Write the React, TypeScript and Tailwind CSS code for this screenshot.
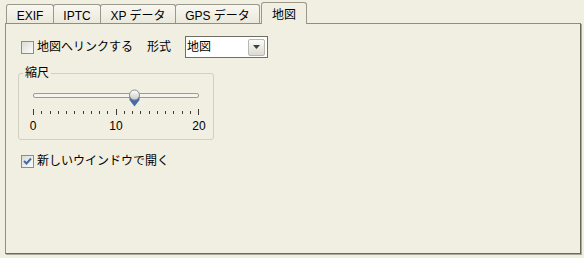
import React from "react";

const font = { fontFamily: '"Liberation Sans", "Noto Sans CJK JP", sans-serif' };

const tabs = [
  { label: "EXIF", w: "w-[48px]" },
  { label: "IPTC", w: "w-[48px]" },
  { label: "XP データ", w: "w-[76px]" },
  { label: "GPS データ", w: "w-[85px]" },
];

function CheckBox({ checked }: { checked?: boolean }) {
  return (
    <div className="w-[13px] h-[13px] border border-[#8d8c86] bg-gradient-to-br from-[#dcdcd6] to-[#fbfbf9] flex items-center justify-center">
      {checked && (
        <svg width="9" height="9" viewBox="0 0 9 9">
          <path d="M1 4 L3.5 6.5 L8 1.5" fill="none" stroke="#4a6aa5" strokeWidth="2" />
        </svg>
      )}
    </div>
  );
}

function Thumb() {
  return (
    <svg width="11" height="18" viewBox="0 0 11 18" className="absolute left-[95px] top-[-5px]">
      <defs>
        <linearGradient id="tg" x1="0" y1="0" x2="0" y2="1">
          <stop offset="0" stopColor="#ffffff" />
          <stop offset="1" stopColor="#c9c9c2" />
        </linearGradient>
      </defs>
      <path d="M0.5 7 L10.5 7 L10.5 11 L5.5 17.5 L0.5 11 Z" fill="#456ca8" />
      <circle cx="5.5" cy="6" r="5" fill="url(#tg)" stroke="#8e8e86" />
    </svg>
  );
}

export default function App() {
  const ticks = Array.from({ length: 21 }, (_, i) => i);
  return (
    <div className="w-[584px] h-[258px] bg-[#f1efe2] text-[12px] text-black overflow-hidden" style={font}>
      {/* Tab strip */}
      <div className="flex items-end h-[23px] pl-[6px]">
        {tabs.map((t, i) => (
          <div
            key={t.label}
            className={`${t.w} h-[19px] ${i > 0 ? "-ml-px" : ""} border border-b-0 border-[#9a9888] rounded-t-[3px] bg-gradient-to-b from-[#f8f7f1] to-[#ebe9dc] flex justify-center pt-[4px] leading-[15px]`}
          >
            {t.label}
          </div>
        ))}
        <div className="relative z-10 ml-px w-[46px] h-[22px] -mb-px border border-b-0 border-[#9a9888] rounded-t-[3px] bg-[#f1efe2] flex justify-center pt-[5px] leading-[15px]">
          地図
        </div>
      </div>

      {/* Panel */}
      <div className="ml-[5px] w-[576px] h-[231px] border border-[#8f8e80] border-r-[#6b6a5c] border-b-[#6b6a5c] shadow-[1px_1px_0_#a9a898]">
        <div className="flex items-center h-[22px] mt-[12px] pl-[15px]">
          <CheckBox />
          <span className="ml-[3px]">地図へリンクする</span>
          <span className="ml-[14px]">形式</span>
          <div className="ml-[14px] w-[83px] h-[22px] border border-[#6f6e63] bg-white flex items-center justify-between pl-[1px] pr-[2px]">
            <span>地図</span>
            <div className="w-[17px] h-[17px] border border-[#b9b8ad] rounded-[2px] bg-gradient-to-b from-[#fbfbf8] to-[#dcdbd2] flex items-center justify-center">
              <svg width="7" height="4" viewBox="0 0 7 4">
                <path d="M0 0 H7 L3.5 4 Z" fill="#3f3f3f" />
              </svg>
            </div>
          </div>
        </div>

        <fieldset className="ml-[12px] mt-[8px] w-[196px] h-[74px] border border-[#d0d0bf] rounded-[3px]">
          <legend className="ml-[4px] px-[2px] leading-[14px]">縮尺</legend>
          <div className="relative ml-[14px] mt-[13px] w-[166px] h-[5px] border border-[#9d9c93] rounded-[2px] bg-[#f4f3ee]">
            <Thumb />
          </div>
          <div className="ml-[14px] mt-[11px] w-[166px] h-[6px] flex justify-between items-end">
            {ticks.map((i) => (
              <div key={i} className={`w-px ${i === 0 || i === 10 || i === 20 ? "h-[6px]" : "h-[3px] mb-[1px]"} bg-[#3a3a3a]`} />
            ))}
          </div>
          <div className="ml-[4px] mt-[4px] w-[186px] flex justify-between leading-[14px]">
            <span className="w-[20px] text-center">0</span>
            <span className="w-[20px] text-center">10</span>
            <span className="w-[20px] text-center">20</span>
          </div>
        </fieldset>

        <div className="flex items-center h-[16px] mt-[13px] pl-[15px]">
          <CheckBox checked />
          <span className="ml-[3px]">新しいウインドウで開く</span>
        </div>
      </div>
    </div>
  );
}
